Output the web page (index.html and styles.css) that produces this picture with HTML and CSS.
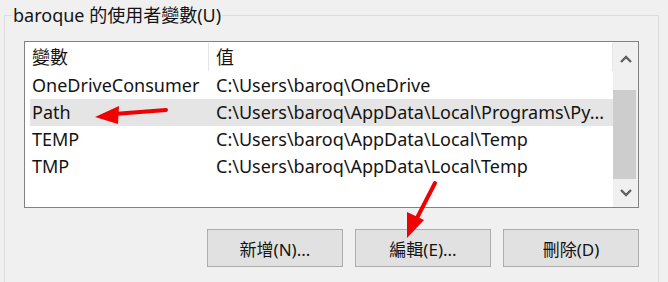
FILE: index.html
```html
<!DOCTYPE html>
<html lang="zh-Hant">
  <head>
    <meta charset="UTF-8" />
    <title>環境變數</title>
    <link rel="stylesheet" href="styles.css">
  </head>
  <body>
    <div class="group">
      <div class="group-title">baroque 的使用者變數(U)</div>

      <div class="list-box">
        <div class="list-rows">
          <div class="list-head">
            <div class="col-name">變數</div>
            <div class="col-value">值</div>
          </div>
          <div class="list-row">
            <div class="col-name">OneDriveConsumer</div>
            <div class="col-value">C:\Users\baroq\OneDrive</div>
          </div>
          <div class="list-row selected">
            <div class="col-name">Path</div>
            <div class="col-value">C:\Users\baroq\AppData\Local\Programs\Py...</div>
          </div>
          <div class="list-row">
            <div class="col-name">TEMP</div>
            <div class="col-value">C:\Users\baroq\AppData\Local\Temp</div>
          </div>
          <div class="list-row">
            <div class="col-name">TMP</div>
            <div class="col-value">C:\Users\baroq\AppData\Local\Temp</div>
          </div>
        </div>

        <div class="scrollbar">
          <div class="scroll-btn scroll-up">
            <svg viewBox="0 0 12 8" width="12" height="8">
              <polyline points="1,7 6,2 11,7" fill="none" stroke="#606060" stroke-width="2.4" />
            </svg>
          </div>
          <div class="scroll-track">
            <div class="scroll-thumb"></div>
          </div>
          <div class="scroll-btn scroll-down">
            <svg viewBox="0 0 12 8" width="12" height="8">
              <polyline points="1,1 6,6 11,1" fill="none" stroke="#606060" stroke-width="2.4" />
            </svg>
          </div>
        </div>
      </div>

      <div class="buttons">
        <button class="win-btn">新增(N)...</button>
        <button class="win-btn">編輯(E)...</button>
        <button class="win-btn">刪除(D)</button>
      </div>
    </div>

    <!-- annotation arrows drawn over the dialog -->
    <svg class="marks" viewBox="0 0 668 282" width="668" height="282">
      <line x1="166" y1="110" x2="114" y2="114" stroke="#f00000" stroke-width="4" stroke-linecap="round" />
      <polygon points="95,117 119,106 118,124" fill="#f00000" />
      <line x1="435" y1="183" x2="417" y2="218" stroke="#f00000" stroke-width="4" stroke-linecap="round" />
      <polygon points="407,238 407,212 424,220" fill="#f00000" />
    </svg>
  </body>
</html>
```

FILE: styles.css
```css
body {
  margin: 0px;
  height: 282px;
  overflow: hidden;
  background-color: rgb(240, 240, 240);
  color: rgb(20, 20, 20);
  font-family: 'Noto Sans', 'Noto Sans CJK TC', sans-serif;
  font-size: 18px;
  position: relative;
}

.group {
  margin: 15px 9px 0px 4px;
  height: 267px;
  box-sizing: border-box;
  border: 1px solid rgb(220, 220, 220);
  border-bottom: none;
  padding: 0px 19px 0px 19px;
}

.group-title {
  display: table;
  margin: -12px 0px 0px -12px;
  padding: 0px 1px;
  background-color: rgb(240, 240, 240);
  font-size: 18px;
  line-height: 22px;
}

.list-box {
  margin-top: 15px;
  height: 165px;
  border: 1px solid rgb(130, 130, 130);
  background-color: white;
  display: flex;
}

.list-rows {
  flex: 1;
  min-width: 0;
}

.list-head,
.list-row {
  display: flex;
  white-space: nowrap;
}

.list-head {
  height: 30px;
  align-items: center;
}

.list-head > div {
  height: 28px;
  line-height: 28px;
  border-right: 1px solid rgb(229, 229, 229);
}

.list-row {
  height: 27px;
  line-height: 27px;
}

.list-row.selected {
  margin-left: 5px;
  background-color: rgb(229, 229, 229);
}

.col-name {
  width: 176px;
  padding-left: 7px;
}

.list-row.selected .col-name {
  padding-left: 2px;
}

.col-value {
  flex: 1;
  padding-left: 7px;
  overflow: hidden;
}

.list-row .col-value {
  padding-left: 8px;
}

.scrollbar {
  width: 25px;
  background-color: rgb(240, 240, 240);
  display: flex;
  flex-direction: column;
}

.scroll-btn {
  display: grid;
  place-items: center;
}

.scroll-up {
  height: 33px;
}

.scroll-down {
  height: 28px;
}

.scroll-track {
  flex: 1;
  padding-top: 15px;
}

.scroll-thumb {
  height: 89px;
  margin-right: 2px;
  background-color: rgb(205, 205, 205);
}

.buttons {
  margin-top: 21px;
  display: flex;
  justify-content: flex-end;
  gap: 12px;
}

.win-btn {
  width: 136px;
  height: 38px;
  border: 1px solid rgb(173, 173, 173);
  background-color: rgb(225, 225, 225);
  color: rgb(20, 20, 20);
  font-family: 'Noto Sans', 'Noto Sans CJK TC', sans-serif;
  font-size: 17px;
  padding: 0px;
}

.marks {
  position: absolute;
  left: 0px;
  top: 0px;
  pointer-events: none;
}
```
